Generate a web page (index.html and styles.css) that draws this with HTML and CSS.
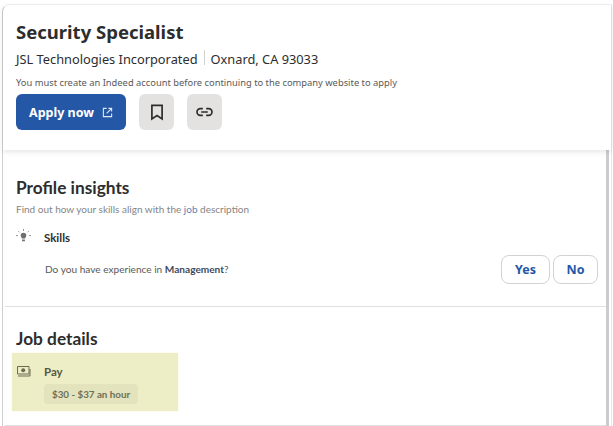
FILE: index.html
```html
<!DOCTYPE html>
<html lang="en">
<head>
<meta charset="utf-8">
<title>Security Specialist</title>
<link rel="stylesheet" href="styles.css">
</head>
<body>
<div class="pane">
  <header class="head">
    <h1 class="title">Security Specialist</h1>
    <div class="company"><span>JSL Technologies Incorporated</span><span class="sep"></span><span>Oxnard, CA 93033</span></div>
    <p class="notice">You must create an Indeed account before continuing to the company website to apply</p>
    <div class="actions">
      <button class="apply">Apply now
        <svg class="ext" viewBox="0 0 12 12" width="11" height="11"><path d="M5 1.500H1.500v9h9V7M7 1.500h3.500V5M10.300 1.700 5 7" fill="none" stroke="#dfe7f3" stroke-width="1.200"/></svg>
      </button>
      <button class="icon-btn"><svg viewBox="0 0 16 20" width="14" height="17"><path d="M2 1.500h12v16l-6-4-6 4z" fill="none" stroke="#2d2d2d" stroke-width="2"/></svg></button>
      <button class="icon-btn"><svg viewBox="0 0 20 12" width="17" height="10"><path d="M8 2H5a4 4 0 0 0 0 8h3M12 2h3a4 4 0 0 1 0 8h-3M6 6h8" fill="none" stroke="#2d2d2d" stroke-width="2"/></svg></button>
    </div>
  </header>
  <div class="scroll">
    <div class="content">
      <section class="insights">
        <h2 class="h2">Profile insights</h2>
        <p class="sub">Find out how your skills align with the <span class="job">job</span> description</p>
        <div class="row">
          <svg class="bulb" viewBox="0 0 16 16" width="15" height="15"><path d="M5 7a3 3 0 1 1 6 0c0 1.300-1 2-1.200 3.200H6.200C6 9 5 8.300 5 7zM6.500 11.200h3v1.800h-3z" fill="#6f6f6f"/><path d="M8 0v2M2.500 2.300l1.200 1.200M13.500 2.300l-1.200 1.200M0 7h2M14 7h2" stroke="#8a8a8a" stroke-width="1"/></svg>
          <strong class="label">Skills</strong>
        </div>
        <div class="question">
          <span class="ask">Do you have experience in <b>Management</b>?</span>
          <div class="answers"><button class="ans yes">Yes</button><button class="ans no">No</button></div>
        </div>
      </section>
      <section class="details">
        <h2 class="h2">Job details</h2>
        <div class="pay">
          <svg class="money" viewBox="0 0 14 12" width="14" height="12"><path d="M.500.500h11.500v7.500H.500z" fill="none" stroke="#6b6b52" stroke-width="1"/><circle cx="6.200" cy="4.200" r="2" fill="#6b6b52"/><path d="M1 10h12V3" fill="none" stroke="#6b6b52" stroke-width="1"/></svg>
          <div>
            <strong class="pay-label">Pay</strong>
            <span class="tag">$30 - $37 an hour</span>
          </div>
        </div>
      </section>
    </div>
    <div class="thumb"></div>
  </div>
</div>
</body>
</html>
```
FILE: styles.css
```css
* { box-sizing: border-box; }
html, body { margin: 0; height: 100%; background: #fff; overflow: hidden; }
body { font-family: "Noto Sans", "Liberation Sans", sans-serif; color: #2d2d2d; }
.pane { width: 610px; height: 422px; margin: 4px 0 0 2px; border: 1px solid #e6e6e6; border-top-color: #f0f0f0; border-left-color: #cfcfcf; border-bottom: 0; border-top-left-radius: 8px; display: flex; flex-direction: column; }
.head { height: 145px; flex: none; padding: 14px 0 0 13px; box-shadow: 0 2px 5px rgba(0,0,0,.1); position: relative; }
.title { margin: 0; font-size: 18.500px; line-height: 26px; font-weight: 700; }
.company { margin-top: 4px; display: flex; align-items: center; font-size: 12.800px; line-height: 20px; }
.sep { width: 1px; height: 15px; margin: -4px 6px 0; background: #d4d2d0; }
.notice { margin: 7px 0 0; font-size: 9.350px; line-height: 14px; color: #595959; }
.actions { margin-top: 4px; display: flex; gap: 13px; }
.apply { width: 110px; height: 36px; border: 0; border-radius: 6px; background: #2557a7; color: #fff; font: 700 12.500px "Noto Sans", sans-serif; display: flex; align-items: center; justify-content: center; gap: 8px; padding: 0; }
.icon-btn { width: 35px; height: 36px; border: 0; border-radius: 6px; background: #e4e2e0; display: flex; align-items: center; justify-content: center; padding: 0; }
.scroll { flex: 1; display: flex; min-height: 0; }
.content { flex: 1; min-width: 0; display: flex; flex-direction: column; }
.thumb { flex: none; width: 3px; margin-right: 2px; background: #cccccc; }
.insights { height: 157px; flex: none; margin-left: 2px; padding: 27px 0 0 11px; border-bottom: 1px solid #e0e0e0; }
.h2 { margin: 0; font-family: "Lato", sans-serif; font-size: 17.300px; line-height: 22px; font-weight: 700; }
.sub { margin: 3px 0 0; font-size: 10px; line-height: 14px; font-family: "Lato", sans-serif; color: #858585; }
.job { color: #5b7fb8; }
.row { margin-top: 12px; display: flex; align-items: center; gap: 12px; height: 18px; }
.bulb { flex: none; margin-top: -2px; }
.label { font: 700 11.500px "Lato", sans-serif; margin-left: 1px; }
.question { margin: 9px 8px 0 29px; display: flex; align-items: center; justify-content: space-between; font: 10.100px "Lato", sans-serif; color: #595959; }
.ask { padding-bottom: 2px; }
.question b { color: #3f4a5c; }
.answers { display: flex; gap: 3px; }
.ans { height: 29px; padding: 0; background: #fff; border: 1px solid #d4d2d0; border-radius: 8px; color: #2557a7; font: 700 12.500px "Noto Sans", sans-serif; }
.yes { width: 49px; }
.no { width: 45px; }
.details { flex: 1; margin-left: 2px; padding: 21px 0 0 11px; border-bottom: 1px solid #e0e0e0; }
.pay { width: 166px; height: 58px; margin: 3px 0 0 -4px; padding: 10px 0 0 5px; background: #eeeec6; display: flex; gap: 13px; box-shadow: 0 0 2px #f6f6d0; }
.money { flex: none; margin-top: 3px; }
.pay-label { display: block; font: 700 11.500px/18px "Lato", sans-serif; color: #57573f; }
.tag { display: inline-block; margin-top: 2px; padding: 0 8px; height: 20px; border-radius: 4px; background: #e3e3bd; font: 700 9.800px/20px "Lato", sans-serif; color: #6f6f55; }
```
